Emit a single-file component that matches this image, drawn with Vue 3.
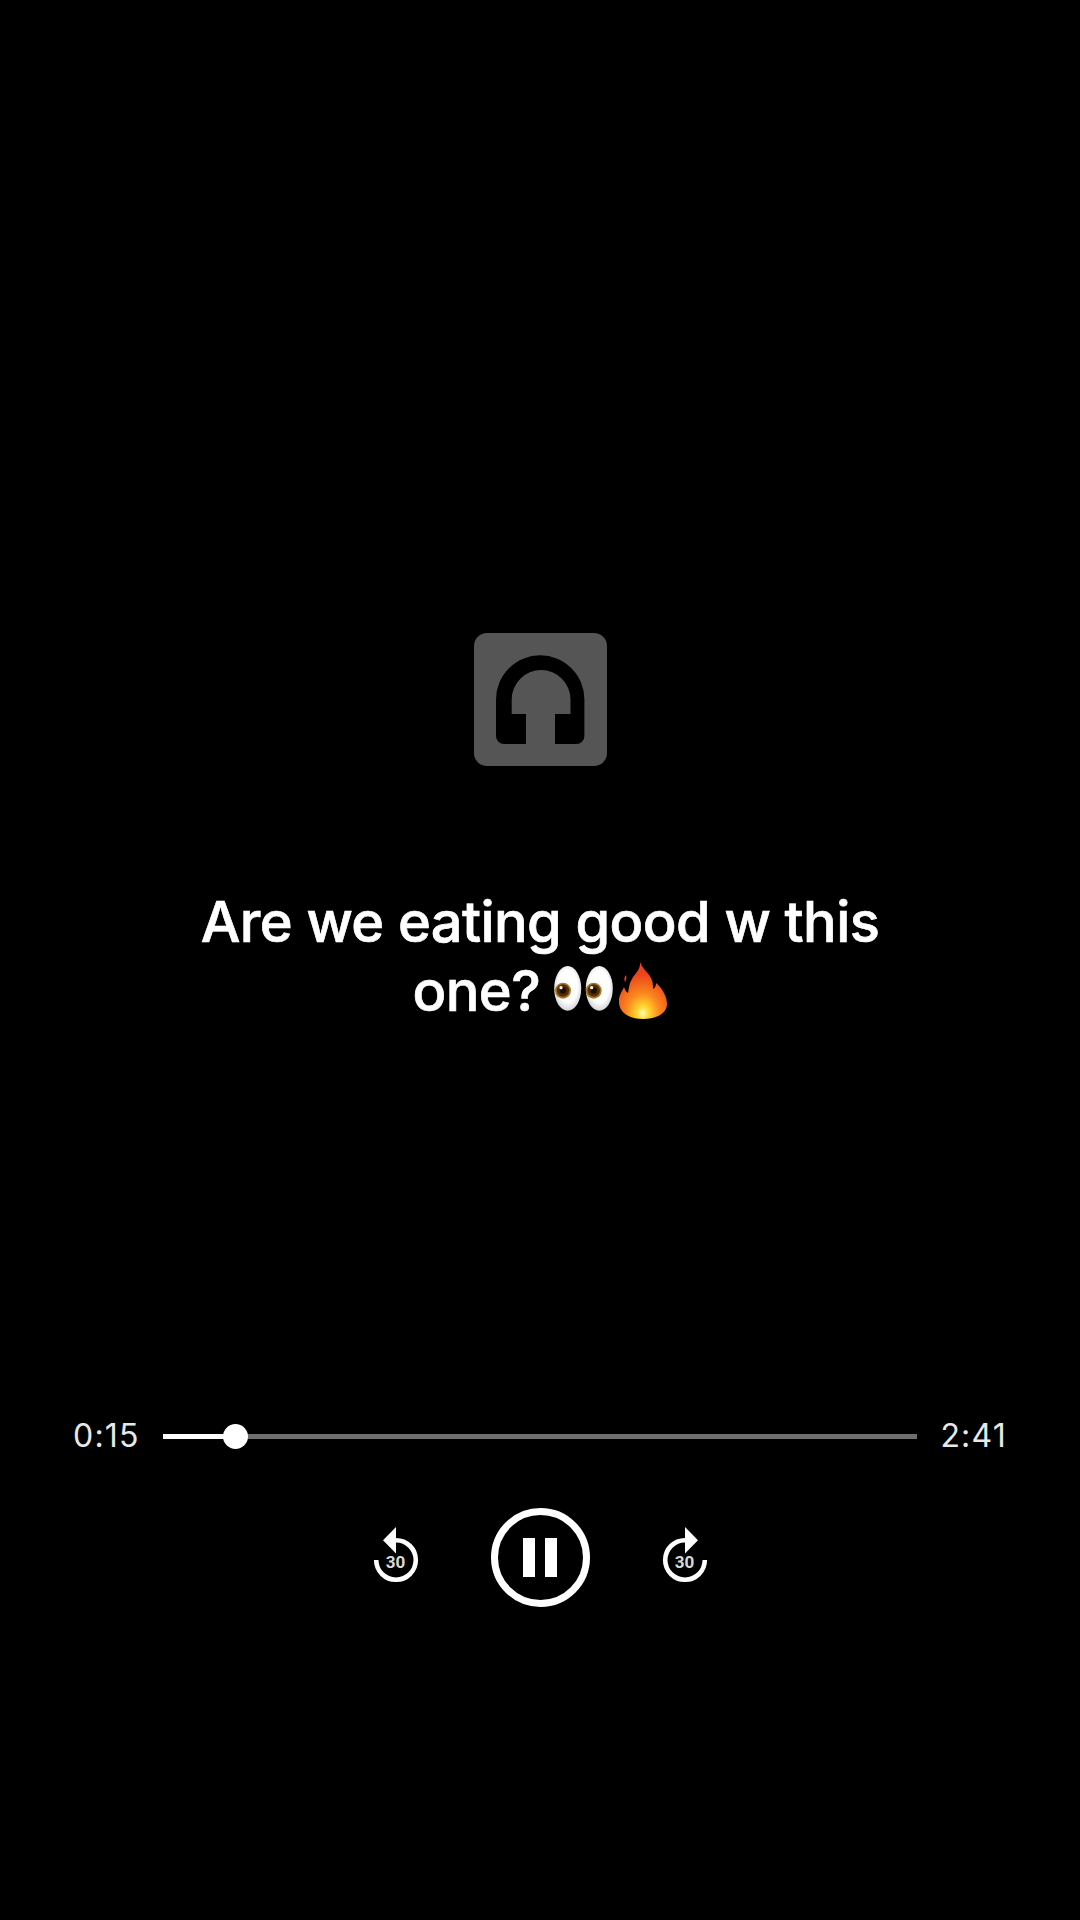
<script setup>
const title = 'Are we eating good w this one?'
const current = '0:15'
const total = '2:41'
const progress = 9.7
</script>

<template>
  <div class="player">
    <div class="cover">
      <svg viewBox="0 0 133 133" width="133" height="133">
        <rect width="133" height="133" rx="13" fill="#555555" />
        <path fill="#000" d="M22 66.5a44.2 44.2 0 0 1 88.4 0V103a8 8 0 0 1-8 8H81V81h15.5V66.5a29.4 29.4 0 0 0-58.8 0V81H52v30H30a8 8 0 0 1-8-8z" />
      </svg>
    </div>

    <h1 class="title">
      {{ title }}
      <svg class="eyes" viewBox="0 0 59 45" width="59" height="45" role="img" aria-label="eyes">
        <defs>
          <radialGradient id="eyeball" cx="0.5" cy="0.45" r="0.6">
            <stop offset="0.6" stop-color="#ffffff" />
            <stop offset="1" stop-color="#c9c7cf" />
          </radialGradient>
        </defs>
        <ellipse cx="13.7" cy="22.4" rx="13.5" ry="22.3" fill="url(#eyeball)" />
        <ellipse cx="45.3" cy="22.4" rx="13.5" ry="22.3" fill="url(#eyeball)" />
        <circle cx="9" cy="24.7" r="8" fill="#a67a1c" />
        <circle cx="39.7" cy="24.7" r="8" fill="#a67a1c" />
        <circle cx="9" cy="24.5" r="6.2" fill="#552c0e" />
        <circle cx="39.7" cy="24.5" r="6.2" fill="#552c0e" />
        <circle cx="9" cy="24.5" r="3.2" fill="#1e0e04" />
        <circle cx="39.7" cy="24.5" r="3.2" fill="#1e0e04" />
        <circle cx="7" cy="21.7" r="1.6" fill="#fff" />
        <circle cx="37.7" cy="21.7" r="1.6" fill="#fff" />
      </svg>
      <svg class="fire" viewBox="0 0 48 58" width="48" height="58" role="img" aria-label="fire">
        <defs>
          <radialGradient id="flame" cx="0.5" cy="0.9" r="0.8">
            <stop offset="0" stop-color="#fffbb0" />
            <stop offset="0.16" stop-color="#ffd52e" />
            <stop offset="0.42" stop-color="#fb8a1e" />
            <stop offset="0.85" stop-color="#ec431c" />
          </radialGradient>
        </defs>
        <path fill="url(#flame)" d="M21 0c1 7 8 11 11 17 2 4 2 7 2 11 2-1 3-3 3-6 6 5 11 13 11 21 0 9-10 15-24 15S1 52 0 42c-1-7 3-11 5-16 1 3 2 5 4 6 1-5 1-9 4-14 3-6 9-9 8-18z" />
        <path fill="#e8401c" d="M7 14c1 3 0 5-1 7-1-2-1-5 1-7z" />
      </svg>
    </h1>

    <div class="timeline">
      <span class="time">{{ current }}</span>
      <div class="track">
        <div class="fill" :style="{ width: progress + '%' }">
          <span class="knob"></span>
        </div>
      </div>
      <span class="time">{{ total }}</span>
    </div>

    <div class="controls">
      <button class="skip" aria-label="Back 30 seconds">
        <svg viewBox="0 0 48 58" width="48" height="58">
          <path fill="none" stroke="#fff" stroke-width="4.6" d="M4.2 33a19.8 19.8 0 1 0 19.8-19.8" />
          <path fill="#fff" d="M24 0v26.5L11 13.3z" />
        </svg>
        <span class="skip-label">30</span>
      </button>
      <button class="pause" aria-label="Pause">
        <span class="bar"></span>
        <span class="bar"></span>
      </button>
      <button class="skip" aria-label="Forward 30 seconds">
        <svg viewBox="0 0 48 58" width="48" height="58">
          <path fill="none" stroke="#fff" stroke-width="4.6" d="M43.8 33a19.8 19.8 0 1 1-19.8-19.8" />
          <path fill="#fff" d="M24 0v26.5l13-13.2z" />
        </svg>
        <span class="skip-label">30</span>
      </button>
    </div>
  </div>
</template>

<style scoped>
.player {
  width: 1080px;
  height: 1920px;
  background: #000;
  color: #fff;
  display: flex;
  flex-direction: column;
  align-items: center;
  padding-top: 633px;
  box-sizing: border-box;
  font-family: Inter, "Liberation Sans", sans-serif;
  overflow: hidden;
}

.cover {
  height: 133px;
  display: flex;
}

.title {
  width: 720px;
  margin: 122px 0 0;
  font-size: 56px;
  font-weight: 500;
  -webkit-text-stroke: 0.7px #fff;
  letter-spacing: -0.6px;
  line-height: 69px;
  text-align: center;
}

.fire {
  margin-left: 6px;
  vertical-align: -8px;
}

.timeline {
  width: 934px;
  margin-top: 390px;
  display: flex;
  align-items: center;
  gap: 23px;
}

.time {
  font-size: 32px;
  letter-spacing: 1.2px;
  color: #e8e8e8;
  line-height: 40px;
}

.track {
  flex: 1;
  height: 5px;
  background: #6f6f6f;
}

.fill {
  height: 100%;
  background: #fff;
  position: relative;
}

.knob {
  position: absolute;
  right: -12px;
  top: -10px;
  width: 25px;
  height: 25px;
  border-radius: 50%;
  background: #fff;
}

.controls {
  margin-top: 52px;
  display: flex;
  align-items: center;
  gap: 71px;
}

button {
  background: none;
  border: none;
  padding: 0;
  color: #fff;
  font-family: inherit;
}

.skip {
  width: 48px;
  height: 58px;
  position: relative;
  margin-bottom: 4px;
}

.skip svg {
  display: block;
}

.skip-label {
  position: absolute;
  left: 0;
  right: 0;
  top: 26px;
  text-align: center;
  font-family: Roboto, sans-serif;
  font-size: 17px;
  font-weight: 700;
  line-height: 18px;
  color: #d8d8d8;
}

.pause {
  width: 99px;
  height: 99px;
  box-sizing: border-box;
  border: 7px solid #fff;
  border-radius: 50%;
  display: flex;
  align-items: center;
  justify-content: center;
  gap: 10px;
}

.bar {
  width: 12px;
  height: 39px;
  background: #fff;
}
</style>

<style>
body {
  background: #000;
}
</style>
